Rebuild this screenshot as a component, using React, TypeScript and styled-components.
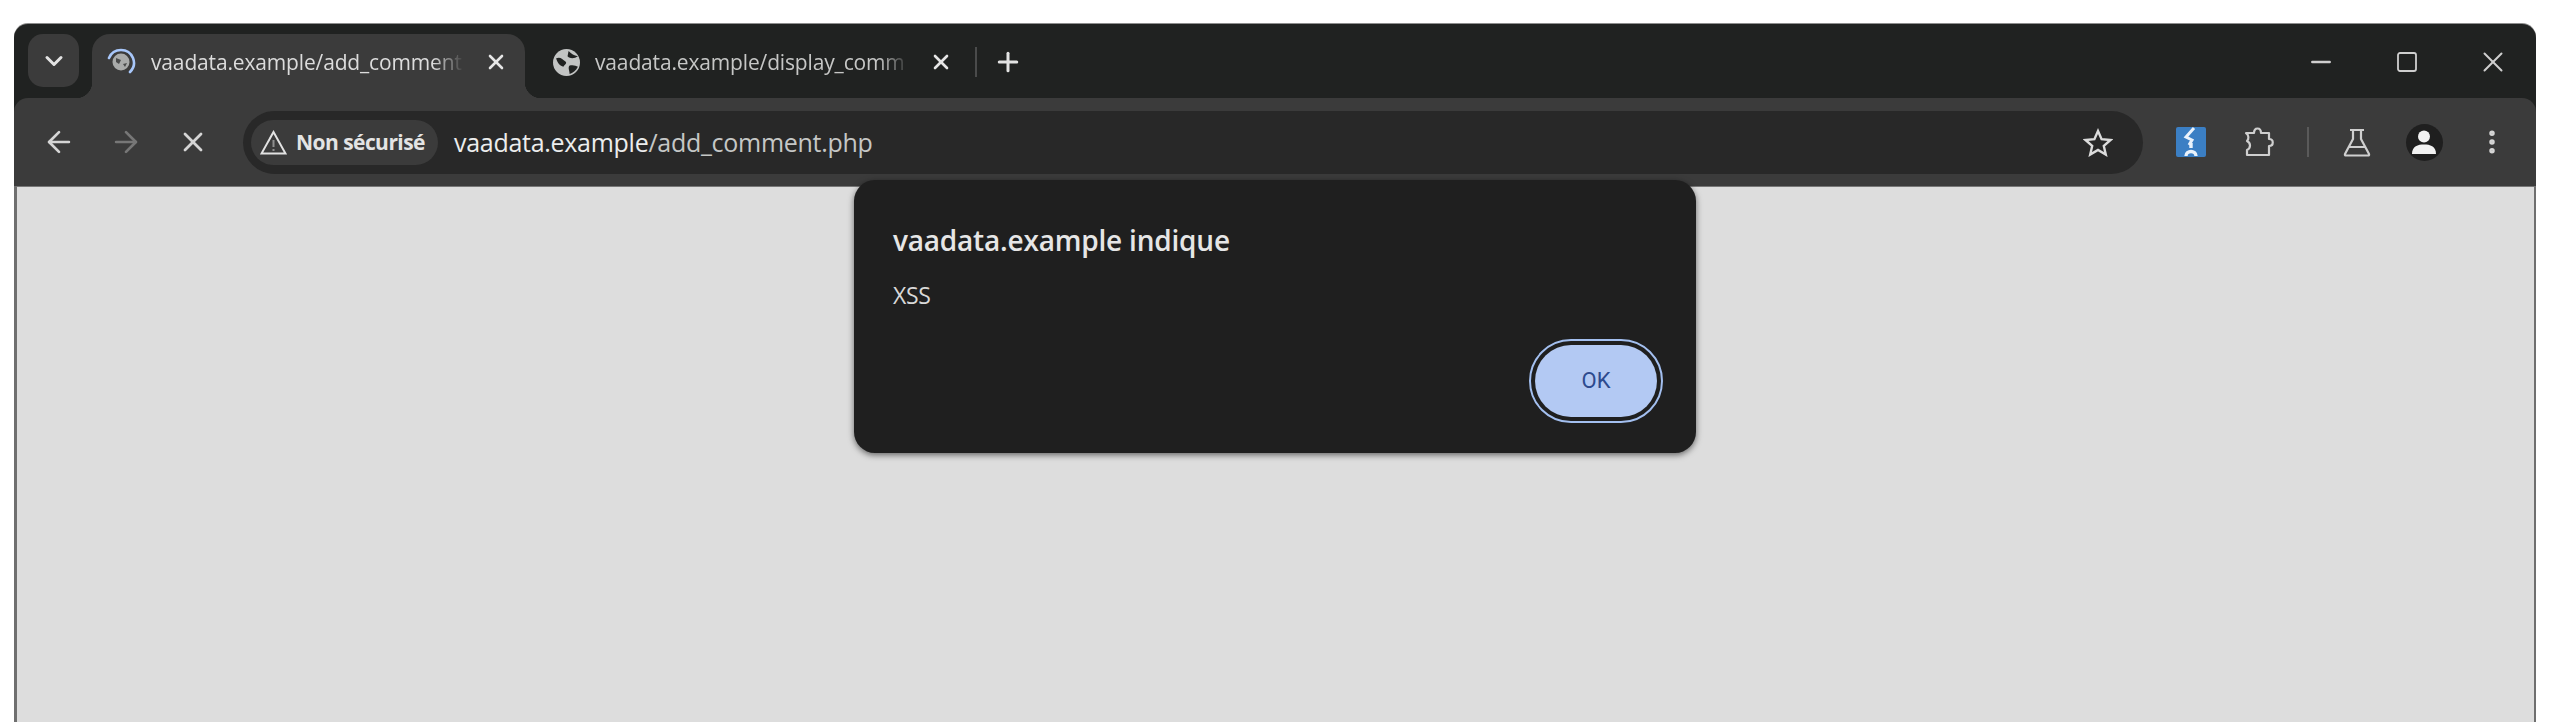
import React from "react";
import styled, { createGlobalStyle } from "styled-components";
import { ArrowLeft, ArrowRight, ChevronDown, EllipsisVertical, Minus, Plus, Square, X } from "lucide-react";

const STRIP_BG = "#202221";
const TOOLBAR_BG = "#3b3b3b";
const FONT = `"Open Sans", "Noto Sans", sans-serif`;

const GlobalStyle = createGlobalStyle`
  html, body {
    margin: 0;
    background: #fff;
    font-family: ${FONT};
  }
`;

const Page = styled.div`
  box-sizing: border-box;
  width: 2560px;
  height: 722px;
  padding: 24px 24px 0 14px;
  overflow: hidden;
  background: #fff;
`;

const Window = styled.div`
  height: 100%;
  display: flex;
  flex-direction: column;
  background: ${STRIP_BG};
  border-radius: 14px 14px 0 0;
  box-shadow: 0 -1px 0 #8d8d8d;
  filter: blur(0.6px);
`;

const TabStrip = styled.div`
  flex: none;
  box-sizing: border-box;
  height: 74px;
  padding: 10px 0 0 14px;
  display: flex;
  align-items: flex-start;
`;

const TabSearch = styled.div`
  width: 51px;
  height: 53px;
  margin-right: 13px;
  display: flex;
  align-items: center;
  justify-content: center;
  background: ${TOOLBAR_BG};
  border-radius: 15px;
  color: #e3e3e3;
`;

const Tab = styled.div<{ $active?: boolean }>`
  position: relative;
  box-sizing: border-box;
  width: ${p => (p.$active ? "433px" : "430px")};
  height: 64px;
  padding: 0 ${p => (p.$active ? "17px" : "2px")} 8px ${p => (p.$active ? "14px" : "28px")};
  display: flex;
  align-items: center;
  background: ${p => (p.$active ? TOOLBAR_BG : "transparent")};
  border-radius: 18px 18px 0 0;
  color: ${p => (p.$active ? "#dcdcdc" : "#c6c7c6")};

  ${p =>
    p.$active &&
    `
    &::before,
    &::after {
      content: "";
      position: absolute;
      bottom: 0;
      width: 16px;
      height: 16px;
    }
    &::before {
      left: -16px;
      background: radial-gradient(circle at 0 0, transparent 16px, ${TOOLBAR_BG} 16.5px);
    }
    &::after {
      right: -16px;
      background: radial-gradient(circle at 100% 0, transparent 16px, ${TOOLBAR_BG} 16.5px);
    }
  `}
`;

const TabTitle = styled.span<{ $width: number }>`
  width: ${p => p.$width}px;
  margin-left: 15px;
  white-space: nowrap;
  font-size: 21px;
  letter-spacing: -0.15px;
  -webkit-mask-image: linear-gradient(to right, #000 90%, transparent 100%);
  mask-image: linear-gradient(to right, #000 90%, transparent 100%);
`;

const TabClose = styled.span`
  margin-left: auto;
  display: flex;
  color: #e6e6e6;
`;

const TabDivider = styled.span`
  width: 2px;
  height: 30px;
  margin: 13px 0 0 20px;
  background: #4a4b4b;
`;

const NewTab = styled.span`
  height: 56px;
  margin-left: 16px;
  display: flex;
  align-items: center;
  color: #e3e3e3;
`;

const WindowControls = styled.div`
  margin-left: auto;
  display: flex;
  color: #cfcfcf;
`;

const WindowButton = styled.span`
  width: 86px;
  height: 56px;
  display: flex;
  align-items: center;
  justify-content: center;
`;

const Toolbar = styled.div`
  flex: none;
  box-sizing: border-box;
  height: 88px;
  padding: 0 9px 0 11px;
  display: flex;
  align-items: center;
  background: ${TOOLBAR_BG};
  border-radius: 14px 14px 0 0;
`;

const ToolButton = styled.span<{ $width?: number; $color?: string }>`
  flex: none;
  width: ${p => p.$width ?? 67}px;
  display: flex;
  align-items: center;
  justify-content: center;
  color: ${p => p.$color ?? "#d5d5d5"};
`;

const Omnibox = styled.div`
  flex: 1;
  height: 63px;
  margin: 0 14px 0 17px;
  padding: 0 30px 0 8px;
  display: flex;
  align-items: center;
  background: #282828;
  border-radius: 32px;
`;

const SecurityChip = styled.div`
  box-sizing: border-box;
  height: 45px;
  padding: 0 13px 0 9px;
  display: flex;
  align-items: center;
  gap: 9px;
  background: ${TOOLBAR_BG};
  border-radius: 23px;
  color: #e4e4e4;
  font-size: 21px;
  font-weight: 700;
  letter-spacing: -0.55px;
  white-space: nowrap;
`;

const Url = styled.div`
  margin-left: 16px;
  margin-right: auto;
  color: #c5c7c6;
  font-size: 25px;
  letter-spacing: -0.28px;
  white-space: nowrap;

  b {
    color: #eceded;
    font-weight: 400;
  }
`;

const ToolDivider = styled.span`
  flex: none;
  width: 2px;
  height: 30px;
  margin: 0 14px;
  background: #5a5a5a;
`;

const Avatar = styled.span`
  width: 37px;
  height: 37px;
  display: flex;
  align-items: center;
  justify-content: center;
  background: #1f1f1f;
  border-radius: 50%;
`;

const Content = styled.div`
  position: relative;
  flex: 1;
  background: #dddddd;
  border-left: 3px solid #6f6f6f;
  border-right: 2px solid #6f6f6f;
  border-top: 1px solid #777;
`;

const Dialog = styled.div`
  position: absolute;
  top: -7px;
  left: 837px;
  box-sizing: border-box;
  width: 842px;
  height: 273px;
  padding: 42px 33px 30px 39px;
  display: flex;
  flex-direction: column;
  background: #1f1f1f;
  border-radius: 21px;
  box-shadow: 0 2px 6px rgba(0, 0, 0, 0.55);
`;

const DialogTitle = styled.div`
  color: #e6e6e6;
  font-size: 28px;
  font-weight: 600;
  line-height: 36px;
  letter-spacing: -0.2px;
`;

const DialogText = styled.div`
  margin-top: 22px;
  color: #d8d8d8;
  font-size: 23px;
  line-height: 30px;
  letter-spacing: -0.3px;
`;

const DialogActions = styled.div`
  margin-top: auto;
  display: flex;
  justify-content: flex-end;
`;

const OkButton = styled.button`
  box-sizing: border-box;
  width: 122px;
  height: 72px;
  margin: 6px;
  padding: 0 0 2px;
  border: 0;
  border-radius: 36px;
  background: #b3c9f3;
  outline: 2px solid #a3bfef;
  outline-offset: 4px;
  color: #2d4a8e;
  font-family: "Roboto", sans-serif;
  font-size: 22px;
`;

const SpinnerFavicon = () => (
  <svg width="30" height="30" viewBox="0 0 30 30" fill="none">
    <path d="M3 11 A13 13 0 0 1 27 11 A13 13 0 0 1 24 25" stroke="#a8c7fa" strokeWidth="2.6" strokeLinecap="round" />
    <circle cx="15" cy="15" r="8.5" fill="#a9abaa" />
    <path d="M10 11 l5 2 l-2 4 l-3 -2 z M17 17 l4 -1 l-2 4 z" fill="#4a4b4b" />
  </svg>
);

const GlobeFavicon = () => (
  <svg width="27" height="27" viewBox="0 0 26 26">
    <circle cx="13" cy="13" r="13" fill="#c2c4c3" />
    <path d="M3 9 C7 7 9 10 12 12 C14 14 11 15 10 17 C7 17 4 13 3 9 Z" fill="#202221" />
    <path d="M15 2 C18 5 20 6 24 7 C21 9 17 10 14 7 Z M16 16 C19 15 22 16 24 17 C22 21 19 23 16 24 C16 21 14 18 16 16 Z" fill="#202221" />
  </svg>
);

const WarningIcon = () => (
  <svg width="27" height="25" viewBox="0 0 27 25" fill="none">
    <path d="M13.5 2 L25.5 23.5 H1.5 Z" stroke="#e2e2e2" strokeWidth="2" strokeLinejoin="miter" />
    <path d="M13.5 10 V17 M13.5 19 V21" stroke="#8f8f8f" strokeWidth="2" />
  </svg>
);

const StarIcon = () => (
  <svg width="30" height="29" viewBox="0 0 30 29" fill="none">
    <path d="M15 3 L18.6 11.2 L27.5 12 L20.8 17.9 L22.8 26.6 L15 22 L7.2 26.6 L9.2 17.9 L2.5 12 L11.4 11.2 Z" stroke="#dcdcdc" strokeWidth="2.4" strokeLinejoin="miter" />
  </svg>
);

const ExtensionBadge = () => (
  <svg width="30" height="30" viewBox="0 0 30 30">
    <rect width="30" height="30" rx="2" fill="#3b7fc4" />
    <path d="M18 1 L10 10 L16 13 L13 18" fill="none" stroke="#eaf2fb" strokeWidth="3" />
    <path d="M15 16 L15 21 M10 29 C10 23 20 23 20 29" fill="none" stroke="#eaf2fb" strokeWidth="3.4" />
  </svg>
);

const PuzzleIcon = () => (
  <svg width="32" height="32" viewBox="0 0 32 32" fill="none" stroke="#cfcfcf" strokeWidth="2.2" strokeLinejoin="round">
    <path d="M3 7 H11 C11 1 18 1 18 7 H26 V13 C31 13 31 20 26 20 V29 H4 V24 C8 22 8 17 4 15 C6 13 6 9 3 7 Z" />
  </svg>
);

const FlaskIcon = () => (
  <svg width="28" height="29" viewBox="0 0 28 29" fill="none" stroke="#cfcfcf" strokeWidth="2.2" strokeLinejoin="round">
    <path d="M7 2 H21 M10 2 V11 L2 26 Q1.5 27.5 3 27.5 H25 Q26.5 27.5 26 26 L18 11 V2 M6.5 19 H21.5" />
  </svg>
);

const PersonIcon = () => (
  <svg width="26" height="26" viewBox="0 0 26 26" fill="#f2f2f2">
    <circle cx="13" cy="7.5" r="6" />
    <path d="M1 25 C1 17 7 15.5 13 15.5 C19 15.5 25 17 25 25 Z" />
  </svg>
);

const App: React.FC = () => (
  <>
    <GlobalStyle />
    <Page>
      <Window>
        <TabStrip>
          <TabSearch>
            <ChevronDown size={28} strokeWidth={2.6} />
          </TabSearch>
          <Tab $active>
            <SpinnerFavicon />
            <TabTitle $width={313}>vaadata.example/add_comment</TabTitle>
            <TabClose>
              <X size={24} strokeWidth={2.6} />
            </TabClose>
          </Tab>
          <Tab>
            <GlobeFavicon />
            <TabTitle $width={315}>vaadata.example/display_comm</TabTitle>
            <TabClose>
              <X size={24} strokeWidth={2.6} />
            </TabClose>
          </Tab>
          <TabDivider />
          <NewTab>
            <Plus size={30} strokeWidth={2.4} />
          </NewTab>
          <WindowControls>
            <WindowButton>
              <Minus size={30} strokeWidth={1.9} />
            </WindowButton>
            <WindowButton>
              <Square size={24} strokeWidth={1.8} />
            </WindowButton>
            <WindowButton>
              <X size={34} strokeWidth={1.4} />
            </WindowButton>
          </WindowControls>
        </TabStrip>
        <Toolbar>
          <ToolButton>
            <ArrowLeft size={34} strokeWidth={1.9} />
          </ToolButton>
          <ToolButton $color="#777">
            <ArrowRight size={34} strokeWidth={1.9} />
          </ToolButton>
          <ToolButton>
            <X size={32} strokeWidth={2.1} />
          </ToolButton>
          <Omnibox>
            <SecurityChip>
              <WarningIcon />
              Non sécurisé
            </SecurityChip>
            <Url>
              <b>vaadata.example</b>/add_comment.php
            </Url>
            <StarIcon />
          </Omnibox>
          <ToolButton $width={68}>
            <ExtensionBadge />
          </ToolButton>
          <ToolButton $width={68}>
            <PuzzleIcon />
          </ToolButton>
          <ToolDivider />
          <ToolButton $width={68}>
            <FlaskIcon />
          </ToolButton>
          <ToolButton $width={66}>
            <Avatar>
              <PersonIcon />
            </Avatar>
          </ToolButton>
          <ToolButton $width={70}>
            <EllipsisVertical size={30} strokeWidth={2.4} />
          </ToolButton>
        </Toolbar>
        <Content>
          <Dialog>
            <DialogTitle>vaadata.example indique</DialogTitle>
            <DialogText>XSS</DialogText>
            <DialogActions>
              <OkButton>OK</OkButton>
            </DialogActions>
          </Dialog>
        </Content>
      </Window>
    </Page>
  </>
);

export default App;
